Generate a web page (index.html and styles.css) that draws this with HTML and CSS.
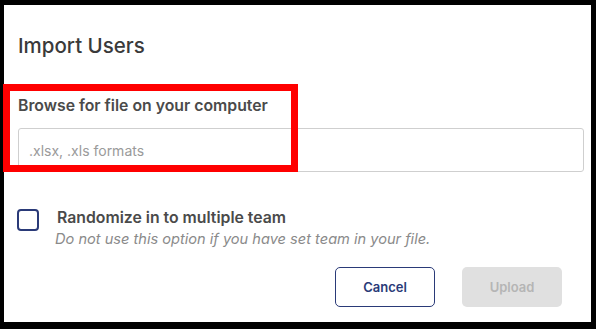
FILE: index.html
```html
<!DOCTYPE html>
<html>
<head>
<meta charset="utf-8">
<link rel="stylesheet" href="styles.css">
</head>
<body>
<div class="dialog">
  <h1 class="title">Import Users</h1>
  <div class="field">
    <label class="label">Browse for file on your computer</label>
    <div class="input"><span class="placeholder">.xlsx, .xls formats</span></div>
  </div>
  <div class="option">
    <span class="checkbox"></span>
    <div class="option-text">
      <div class="option-title">Randomize in to multiple team</div>
      <div class="option-hint">Do not use this option if you have set team in your file.</div>
    </div>
  </div>
  <div class="actions">
    <button class="btn btn-cancel">Cancel</button>
    <button class="btn btn-upload">Upload</button>
  </div>
  <div class="highlight"></div>
</div>
</body>
</html>
```
FILE: styles.css
```css
* { box-sizing: border-box; }
html, body { margin: 0; padding: 0; }
body {
  background: #000;
  width: 596px;
  height: 329px;
  overflow: hidden;
  font-family: Inter, "Noto Sans", sans-serif;
}
.dialog {
  position: relative;
  margin: 5px 0 0 4px;
  width: 587px;
  height: 317px;
  background: #fff;
  padding: 0 7px 0 14px;
}
.title {
  margin: 0;
  padding-top: 29px;
  font-size: 20.5px;
  line-height: 24px;
  font-weight: 500;
  color: #3a3a3a;
}
.field { margin-top: 38px; }
.label {
  display: block;
  font-size: 15.8px;
  line-height: 20px;
  font-weight: 600;
  color: #4a4a4a;
}
.input {
  margin-top: 12px;
  height: 44px;
  border: 1px solid #cfcfcf;
  border-radius: 3px;
  display: flex;
  align-items: center;
  padding-left: 10px;
}
.placeholder {
  font-size: 14px;
  color: #9a9a9a;
}
.option {
  margin-top: 36px;
  display: flex;
  align-items: flex-start;
}
.checkbox {
  width: 22px;
  height: 22px;
  border: 2px solid #2a3a78;
  border-radius: 4px;
  margin-left: -1px;
  margin-top: 1px;
  flex: none;
}
.option-text { margin-left: 18px; }
.option-title {
  font-size: 15.8px;
  line-height: 20px;
  font-weight: 600;
  color: #4a4a4a;
}
.option-hint {
  margin-top: 2px;
  font-size: 14.6px;
  line-height: 18px;
  font-style: italic;
  color: #8a8a8a;
  margin-left: -2px;
}
.actions {
  margin-top: 19px;
  display: flex;
  justify-content: flex-end;
  gap: 27px;
  padding-right: 22px;
}
.btn {
  width: 100px;
  height: 40px;
  border-radius: 5px;
  font-family: Inter, "Noto Sans", sans-serif;
  font-size: 13px;
  font-weight: 600;
}
.btn-cancel {
  background: #fff;
  border: 1.5px solid #2a3a78;
  color: #2a3a78;
}
.btn-upload {
  background: #e0e0e0;
  border: none;
  color: #b5b5b5;
}
.highlight {
  position: absolute;
  left: -1px;
  top: 79px;
  width: 295px;
  height: 88px;
  border: 7px solid #ff0000;
}
```
